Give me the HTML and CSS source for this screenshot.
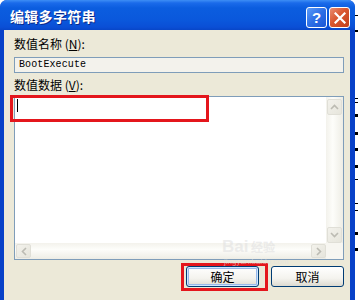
FILE: index.html
```html
<!DOCTYPE html>
<html lang="zh-CN">
  <head>
    <meta charset="UTF-8" />
    <link rel="stylesheet" href="styles.css">
  </head>
  <body>
    <div class="screen">
      <div class="window">
        <div class="titlebar">
          <span class="title">编辑多字符串</span>
          <div class="title-buttons">
            <span class="tb-btn help">?</span>
            <span class="tb-btn close">
              <svg width="12" height="12" viewBox="0 0 12 12">
                <path d="M1.5 1.5 L10.5 10.5 M10.5 1.5 L1.5 10.5" stroke="#fff" stroke-width="2.2" stroke-linecap="square" />
              </svg>
            </span>
          </div>
        </div>
        <div class="client">
          <div class="label">数值名称 (<u>N</u>):</div>
          <div class="field">BootExecute</div>
          <div class="label second">数值数据 (<u>V</u>):</div>
          <div class="editbox">
            <div class="edit-text"><span class="caret"></span></div>
            <div class="vscroll">
              <span class="sb-btn">
                <svg width="9" height="6" viewBox="0 0 9 6"><path d="M1 5 L4.5 1.5 L8 5" fill="none" stroke="#bcbbb3" stroke-width="1.6" /></svg>
              </span>
              <span class="sb-btn">
                <svg width="9" height="6" viewBox="0 0 9 6"><path d="M1 1 L4.5 4.5 L8 1" fill="none" stroke="#bcbbb3" stroke-width="1.6" /></svg>
              </span>
            </div>
            <div class="hscroll">
              <span class="sb-btn">
                <svg width="6" height="9" viewBox="0 0 6 9"><path d="M5 1 L1.5 4.5 L5 8" fill="none" stroke="#bcbbb3" stroke-width="1.6" /></svg>
              </span>
              <span class="sb-btn">
                <svg width="6" height="9" viewBox="0 0 6 9"><path d="M1 1 L4.5 4.5 L1 8" fill="none" stroke="#bcbbb3" stroke-width="1.6" /></svg>
              </span>
            </div>
            <div class="corner"></div>
          </div>
          <div class="buttons">
            <span class="btn default">确定</span>
            <span class="btn">取消</span>
          </div>
        </div>
        <!-- annotation marks drawn over the dialog -->
        <div class="mark mark-edit"></div>
        <div class="mark mark-ok"></div>
        <div class="watermark">Bai<span>经验</span><small>jingyan.baidu.com</small></div>
      </div>
      <div class="behind"></div>
    </div>
  </body>
</html>
```

FILE: styles.css
```css
body {
  margin: 0;
  background: #fff;
  font-family: "Noto Sans CJK SC", "Liberation Sans", sans-serif;
  font-size: 12px;
  color: #000;
}
.screen {
  display: flex;
  width: 358px;
  height: 300px;
  overflow: hidden;
}
.window {
  position: relative;
  width: 355px;
  height: 305px;
  flex: none;
  background: #0841c8;
  border-radius: 7px 7px 0 0;
  display: flex;
  flex-direction: column;
}
.behind {
  flex: 1;
  background:
    linear-gradient(#000, #000) 0 15px / 100% 1px no-repeat,
    linear-gradient(#000, #000) 0 30px / 100% 2px no-repeat,
    linear-gradient(#000, #000) 0 98px / 100% 1px no-repeat,
    linear-gradient(#000, #000) 0 102px / 100% 1px no-repeat,
    linear-gradient(#000, #000) 0 114px / 100% 3px no-repeat,
    linear-gradient(#000, #000) 0 132px / 100% 3px no-repeat,
    linear-gradient(#000, #000) 0 148px / 100% 3px no-repeat,
    linear-gradient(#000, #000) 0 165px / 100% 3px no-repeat,
    linear-gradient(#000, #000) 0 179px / 100% 1px no-repeat,
    linear-gradient(#000, #000) 0 203px / 100% 1px no-repeat,
    linear-gradient(#000, #000) 0 210px / 100% 1px no-repeat,
    linear-gradient(#000, #000) 0 232px / 100% 3px no-repeat,
    linear-gradient(#000, #000) 0 248px / 100% 3px no-repeat,
    #fff;
}
/* title bar */
.titlebar {
  height: 30px;
  flex: none;
  display: flex;
  align-items: center;
  justify-content: space-between;
  padding: 0 5px 0 10px;
  border-radius: 7px 7px 0 0;
  background: linear-gradient(#3d8ef5 0, #1a6aea 3px, #0b5ddf 8px, #0a58dc 20px, #0a4fd6 27px, #0846c8 30px);
}
.title {
  color: #fff;
  font-weight: bold;
  font-size: 14px;
  letter-spacing: 0.3px;
  text-shadow: 1px 1px 0 #0a2a8a;
  padding-top: 1px;
}
.title-buttons {
  display: flex;
  gap: 2px;
  padding-top: 5px;
}
.tb-btn {
  width: 19px;
  height: 19px;
  border: 1px solid #fff;
  border-radius: 3px;
  display: flex;
  align-items: center;
  justify-content: center;
  color: #fff;
  font-family: "Liberation Sans", sans-serif;
  font-weight: bold;
  font-size: 15px;
}
.help {
  background: linear-gradient(135deg, #5c9cf8 0, #2e6fe6 50%, #1a56d6 100%);
}
.close {
  background: linear-gradient(135deg, #e98d72 0, #d9562f 45%, #c1401c 100%);
}
/* client area */
.client {
  flex: 1;
  margin: 0 5px 5px 4px;
  background: #ece9d8;
  padding: 6px 6px 0 10px;
  display: flex;
  flex-direction: column;
}
.label {
  line-height: 16px;
  height: 16px;
}
.label u {
  text-underline-offset: 1px;
}
.label.second {
  margin-top: 4px;
}
.field {
  margin-top: 5px;
  height: 14px;
  border: 1px solid #7f9db9;
  background: #f3f2ec;
  padding-left: 4px;
  font-family: "Liberation Mono", monospace;
  font-size: 10px;
  line-height: 14px;
  letter-spacing: 0.1px;
}
.editbox {
  margin-top: 3px;
  height: 162px;
  border: 1px solid #7f9db9;
  background: #fff;
  display: grid;
  grid-template-columns: 1fr 17px;
  grid-template-rows: 1fr 16px;
}
.edit-text {
  padding: 2px 0 0 2px;
}
.caret {
  display: block;
  width: 1px;
  height: 13px;
  background: #000;
}
.vscroll {
  background: linear-gradient(90deg, #f3f2ec, #fdfdfa 40%, #eeede5);
  display: flex;
  flex-direction: column;
  justify-content: space-between;
  padding: 2px 1px 0 1px;
}
.hscroll {
  background: linear-gradient(#f3f2ec, #fdfdfa 40%, #eeede5);
  display: flex;
  justify-content: space-between;
  padding: 1px 0 1px 1px;
}
.corner {
  background: #f7f6f1;
}
.sb-btn {
  display: flex;
  align-items: center;
  justify-content: center;
  background: linear-gradient(135deg, #f3f2ec, #e6e5dc);
  border: 1px solid #e0dfd7;
  border-radius: 2px;
}
.vscroll .sb-btn {
  height: 14px;
}
.hscroll .sb-btn {
  width: 13px;
}
.buttons {
  display: flex;
  justify-content: flex-end;
  gap: 12px;
  margin-top: 6px;
}
.btn {
  width: 71px;
  height: 19px;
  border: 1px solid #003c74;
  border-radius: 3px;
  background: linear-gradient(#ffffff, #f4f3ee 60%, #dcdad0);
  display: flex;
  align-items: center;
  justify-content: center;
  font-size: 12px;
}
.btn.default {
  box-shadow: inset 0 0 0 1px #cee7ff, inset 0 0 0 2px #98b8ea;
}
/* red annotation frames */
.mark {
  position: absolute;
  border: 3px solid #e4161c;
}
.mark-edit {
  left: 10px;
  top: 95px;
  width: 193px;
  height: 21px;
}
.mark-ok {
  left: 181px;
  top: 263px;
  width: 81px;
  height: 22px;
}
.watermark {
  position: absolute;
  left: 222px;
  top: 238px;
  color: rgba(225, 225, 225, 0.6);
  font-family: "Liberation Sans", sans-serif;
  font-weight: bold;
  font-size: 17px;
  line-height: 17px;
  pointer-events: none;
}
.watermark span {
  font-size: 12px;
  margin-left: 3px;
}
.watermark small {
  display: block;
  font-size: 8px;
  font-weight: normal;
  line-height: 9px;
  margin-left: 2px;
}
```
